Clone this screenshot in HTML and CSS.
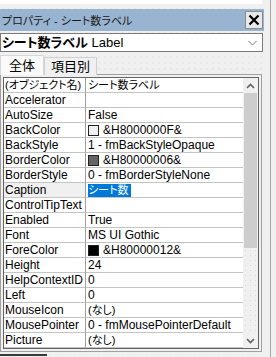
FILE: index.html
```html
<!DOCTYPE html>
<html lang="ja">
<head>
  <meta charset="UTF-8" />
  <title>プロパティ</title>
  <link rel="stylesheet" href="styles.css">
</head>
<body>
  <div class="screen">
    <div class="panel">
      <div class="topstrip"></div>

      <!-- タイトルバー -->
      <div class="titlebar">
        <span class="title">プロパティ - シート数ラベル</span>
        <button class="close-btn">
          <svg width="12" height="12" viewBox="0 0 12 12"><path d="M1.5 1.5 L10.5 10.5 M10.5 1.5 L1.5 10.5" stroke="#000" stroke-width="2.2" fill="none"/></svg>
        </button>
      </div>

      <!-- オブジェクト選択 -->
      <div class="combo">
        <span class="combo-text"><b>シート数ラベル</b> Label</span>
        <svg class="chevron" width="9" height="6" viewBox="0 0 9 6"><path d="M0.5 1 L4.5 5 L8.5 1" stroke="#777" stroke-width="1" fill="none"/></svg>
      </div>

      <!-- タブ -->
      <div class="tabs">
        <div class="tab active">全体</div>
        <div class="tab">項目別</div>
      </div>

      <!-- プロパティ一覧 -->
      <div class="grid-frame">
        <div class="grid-inner">
          <div class="rows">
            <div class="row"><div class="name jp">(オブジェクト名)</div><div class="value jp">シート数ラベル</div></div>
            <div class="row"><div class="name">Accelerator</div><div class="value"></div></div>
            <div class="row"><div class="name">AutoSize</div><div class="value">False</div></div>
            <div class="row"><div class="name">BackColor</div><div class="value"><span class="swatch sw-light"></span>&amp;H8000000F&amp;</div></div>
            <div class="row"><div class="name">BackStyle</div><div class="value">1 - fmBackStyleOpaque</div></div>
            <div class="row"><div class="name">BorderColor</div><div class="value"><span class="swatch sw-dark"></span>&amp;H80000006&amp;</div></div>
            <div class="row"><div class="name">BorderStyle</div><div class="value">0 - fmBorderStyleNone</div></div>
            <div class="row current"><div class="name">Caption</div><div class="value jp"><span class="selected">シート数</span></div></div>
            <div class="row"><div class="name">ControlTipText</div><div class="value"></div></div>
            <div class="row"><div class="name">Enabled</div><div class="value">True</div></div>
            <div class="row"><div class="name">Font</div><div class="value">MS UI Gothic</div></div>
            <div class="row"><div class="name">ForeColor</div><div class="value"><span class="swatch sw-black"></span>&amp;H80000012&amp;</div></div>
            <div class="row"><div class="name">Height</div><div class="value">24</div></div>
            <div class="row"><div class="name">HelpContextID</div><div class="value">0</div></div>
            <div class="row"><div class="name">Left</div><div class="value">0</div></div>
            <div class="row"><div class="name">MouseIcon</div><div class="value jp">(なし)</div></div>
            <div class="row"><div class="name">MousePointer</div><div class="value">0 - fmMousePointerDefault</div></div>
            <div class="row"><div class="name">Picture</div><div class="value jp">(なし)</div></div>
          </div>

          <div class="scrollbar">
            <div class="sb-arrow">
              <svg width="9" height="6" viewBox="0 0 9 6"><path d="M1 5 L4.5 1.5 L8 5" stroke="#606060" stroke-width="1.6" fill="none"/></svg>
            </div>
            <div class="sb-thumb"></div>
            <div class="sb-track"></div>
            <div class="sb-arrow">
              <svg width="9" height="6" viewBox="0 0 9 6"><path d="M1 1 L4.5 4.5 L8 1" stroke="#606060" stroke-width="1.6" fill="none"/></svg>
            </div>
          </div>
        </div>
      </div>
      <div class="bottomstrip"><div class="dark"></div></div>
    </div>
    <div class="side"></div>
  </div>
</body>
</html>
```

FILE: styles.css
```css
body, html {
  margin: 0;
  padding: 0;
  overflow: hidden;
  background-color: #F0F0F0;
  font-family: "Liberation Sans", "Noto Sans CJK JP", sans-serif;
  font-size: 12px;
  font-feature-settings: "palt";
  color: #000;
}

.screen {
  display: flex;
  width: 276px;
  height: 357px;
}

.panel {
  width: 264px;
  display: flex;
  flex-direction: column;
  background-color: #F0F0F0;
  background-image: radial-gradient(#dedede 0.6px, transparent 0.8px);
  background-size: 6px 6px;
}

.side {
  width: 6px;
  border-right: 1px solid #A8A8A8;
  background-color: #F0F0F0;
}

.topstrip {
  height: 4px;
  width: 262px;
  background-color: #fff;
  margin-bottom: 5px;
}

.titlebar {
  height: 22px;
  background-color: #99B4D1;
  display: flex;
  align-items: center;
  justify-content: space-between;
  padding-left: 2px;
  padding-right: 1px;
}

.title {
  font-size: 11px;
  color: #1a1a1a;
}

.close-btn {
  width: 18px;
  height: 18px;
  padding: 0;
  margin: 0;
  border: 1px solid #8a8a8a;
  background-color: #E8E8E8;
  display: flex;
  align-items: center;
  justify-content: center;
}

.combo {
  margin-top: 2px;
  width: 263px;
  height: 19px;
  box-sizing: border-box;
  background-color: #fff;
  border: 1px solid #7A7A7A;
  display: flex;
  align-items: center;
  justify-content: space-between;
  padding: 0 5px 0 1px;
}

.combo-text {
  font-size: 13px;
  line-height: 17px;
}

.combo-text b {
  font-weight: 700;
}

.tabs {
  margin-top: 3px;
  display: flex;
  align-items: flex-end;
  height: 20px;
  position: relative;
  z-index: 1;
  margin-bottom: -1px;
}

.tab {
  height: 17px;
  line-height: 17px;
  padding: 0 6px;
  border: 1px solid #D0D0D0;
  border-bottom: none;
  background-color: #F0F0F0;
  font-size: 13px;
}

.tab.active {
  height: 20px;
  line-height: 19px;
  width: 44px;
  box-sizing: border-box;
  padding-left: 8px;
  background-color: #FAFAFA;
  border-color: #D8D8D8;
}

.grid-frame {
  width: 262px;
  height: 278px;
  box-sizing: border-box;
  border: 1px solid #A0A0A0;
  padding: 2px;
  background-color: #F0F0F0;
}

.grid-inner {
  height: 100%;
  box-sizing: border-box;
  border: 1px solid #646464;
  display: flex;
  background-color: #fff;
}

.rows {
  flex: 1;
  display: flex;
  flex-direction: column;
}

.row {
  display: grid;
  grid-template-columns: 82px 1fr;
  height: 15px;
}

.name, .value {
  height: 15px;
  box-sizing: border-box;
  border-bottom: 1px solid #C4C4C4;
  line-height: 14px;
  white-space: nowrap;
  overflow: hidden;
  font-size: 12px;
}

.name.jp, .value.jp {
  font-size: 11px;
}

.name {
  padding-left: 1px;
  border-right: 1px solid #A0A0A0;
}

.value {
  padding-left: 2px;
  display: flex;
  align-items: center;
}

.row.current .name {
  background-color: #F0F0F0;
}

.selected {
  background-color: #0078D7;
  color: #fff;
  line-height: 13px;
  border-right: 2px solid #0078D7;
}

.swatch {
  width: 9px;
  height: 9px;
  border: 1px solid #222;
  margin-right: 4px;
  flex: none;
}

.sw-light { background-color: #F0F0F0; }
.sw-dark { background-color: #646464; }
.sw-black { background-color: #000; }

.scrollbar {
  width: 15px;
  display: flex;
  flex-direction: column;
  background-color: #F0F0F0;
  background-image: radial-gradient(#dcdcdc 0.6px, transparent 0.8px);
  background-size: 5px 5px;
}

.sb-arrow {
  height: 15px;
  display: flex;
  align-items: center;
  justify-content: center;
  background-color: #F0F0F0;
}

.sb-thumb {
  height: 155px;
  margin: 0 1px;
  background-color: #CDCDCD;
}

.sb-track {
  flex: 1;
}

.bottomstrip {
  flex: 1;
}

.bottomstrip .dark {
  width: 47px;
  height: 2px;
  margin-top: 2px;
  background-color: #3a3a3a;
}
```
